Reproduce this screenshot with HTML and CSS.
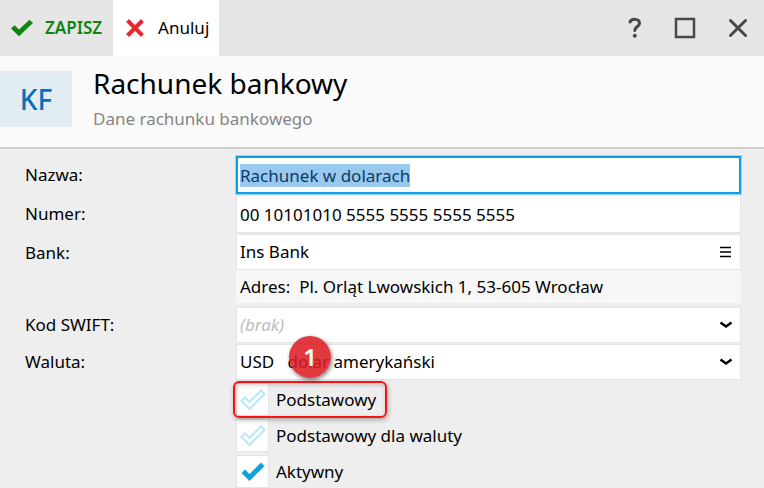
FILE: index.html
```html
<!DOCTYPE html>
<html lang="pl">
<head>
    <meta charset="utf-8">
    <title>Rachunek bankowy</title>
    <link rel="stylesheet" href="styles.css">
</head>
<body>
    <div class="toolbar">
        <button class="tool save">
            <svg width="24" height="18" viewBox="0 0 24 18"><path d="M1 9.500L4.500 6.200 9 10.600 19.500 0.800 23 4 9 17.200z" fill="#10840f"/></svg>
            ZAPISZ
        </button>
        <button class="tool cancel">
            <svg width="18" height="18" viewBox="0 0 18 18"><path d="M1.500 1.500L16.500 16.500M16.500 1.500L1.500 16.500" stroke="#e8262d" stroke-width="4"/></svg>
            Anuluj
        </button>
        <div class="window-buttons">
            <button aria-label="Pomoc">
                <svg width="14" height="22" viewBox="0 0 14 22"><path d="M2 5C3 1.600 11.500 1 11.500 6.200C11.500 9.500 6.800 9.500 6.800 13.500" fill="none" stroke="#484848" stroke-width="3" stroke-linecap="round"/><circle cx="6.800" cy="18.700" r="2" fill="#484848"/></svg>
            </button>
            <button aria-label="Maksymalizuj">
                <svg width="22" height="22" viewBox="0 0 22 22"><rect x="2" y="2" width="18" height="18" fill="none" stroke="#484848" stroke-width="2.500"/></svg>
            </button>
            <button aria-label="Zamknij">
                <svg width="20" height="20" viewBox="0 0 20 20"><path d="M2.500 2.500L17.500 17.500M17.500 2.500L2.500 17.500" stroke="#484848" stroke-width="3" stroke-linecap="round"/></svg>
            </button>
        </div>
    </div>

    <div class="header">
        <div class="initials">KF</div>
        <div class="titles">
            <h1>Rachunek bankowy</h1>
            <p>Dane rachunku bankowego</p>
        </div>
    </div>

    <form class="form">
        <label class="caption" for="nazwa">Nazwa:</label>
        <input class="field active" type="text" id="nazwa" value="Rachunek w dolarach">

        <label class="caption" for="numer">Numer:</label>
        <input class="field" type="text" id="numer" value="00 10101010 5555 5555 5555 5555">

        <label class="caption top" for="bank">Bank:</label>
        <div class="bank">
            <div class="field lookup">
                <input type="text" id="bank" value="Ins Bank">
                <button type="button" aria-label="Lista">
                    <svg width="12" height="12" viewBox="0 0 12 12"><path d="M0 1.500H11M0 6H11M0 10.500H11" stroke="#000" stroke-width="1.500"/></svg>
                </button>
            </div>
            <div class="address">Adres:&nbsp; Pl. Orląt Lwowskich 1, 53-605 Wrocław</div>
        </div>

        <label class="caption" for="swift">Kod SWIFT:</label>
        <div class="dropdown">
            <select class="field empty" id="swift">
                <option>(brak)</option>
            </select>
            <svg width="12" height="8" viewBox="0 0 12 8"><path d="M0.500 1.500L6 5.500 11.500 1.500" fill="none" stroke="#000" stroke-width="2.500"/></svg>
        </div>

        <label class="caption" for="waluta">Waluta:</label>
        <div class="dropdown">
            <select class="field" id="waluta">
                <option>USD&nbsp;&nbsp; dolar amerykański</option>
            </select>
            <svg width="12" height="8" viewBox="0 0 12 8"><path d="M0.500 1.500L6 5.500 11.500 1.500" fill="none" stroke="#000" stroke-width="2.500"/></svg>
            <span class="badge">1</span>
        </div>

        <div class="checks">
            <label class="check marked">
                <input type="checkbox">
                <svg width="26" height="22" viewBox="0 0 26 22"><path d="M1.500 12L5 8.500 9.500 13 21 1.500 24.500 5 9.500 20z"/></svg>
                <span>Podstawowy</span>
            </label>
            <label class="check">
                <input type="checkbox">
                <svg width="26" height="22" viewBox="0 0 26 22"><path d="M1.500 12L5 8.500 9.500 13 21 1.500 24.500 5 9.500 20z"/></svg>
                <span>Podstawowy dla waluty</span>
            </label>
            <label class="check">
                <input type="checkbox" checked>
                <svg width="26" height="22" viewBox="0 0 26 22"><path d="M1.500 12L5 8.500 9.500 13 21 1.500 24.500 5 9.500 20z"/></svg>
                <span>Aktywny</span>
            </label>
        </div>
    </form>
<script>
    let nazwa = document.getElementById("nazwa");
    nazwa.focus();
    nazwa.select();
</script>
</body>
</html>
```
FILE: styles.css
```css
* {
    box-sizing: border-box;
}

body {
    margin: 0;
    min-height: 100vh;
    background-color: #eeeeee;
    color: #000;
    font-family: "Noto Sans", "Open Sans", sans-serif;
    font-size: 17px;
    line-height: 24px;
}

button, input, select {
    margin: 0;
    font: inherit;
    color: inherit;
}

button {
    border: none;
    background: none;
    cursor: pointer;
}

.toolbar {
    display: flex;
    height: 56px;
    background-color: #e6e6e6;
}

.tool {
    display: flex;
    align-items: center;
    padding: 0 10px;
}

.save {
    gap: 11px;
    padding-right: 11px;
    color: #10840f;
    font-weight: 600;
}

.cancel {
    gap: 14px;
    padding-left: 13px;
    background-color: #fff;
}

.window-buttons {
    display: flex;
    align-items: center;
    margin-left: auto;
    padding-right: 16px;
    gap: 32px;
}

.window-buttons button {
    display: flex;
    padding: 0;
}

.header {
    display: flex;
    align-items: flex-start;
    gap: 21px;
    height: 93px;
    background-color: #fafafa;
    border-bottom: 2px solid #d0d0d0;
}

.initials {
    width: 72px;
    margin-top: 15px;
    background-color: #e1ecf3;
    color: #0a6fba;
    font-size: 28px;
    font-weight: 500;
    line-height: 56px;
    text-align: center;
}

.titles h1 {
    margin: 7px 0 0;
    font-size: 28px;
    font-weight: normal;
    line-height: 40px;
}

.titles p {
    margin: 4px 0 0;
    color: #858585;
}

.form {
    display: grid;
    grid-template-columns: 211px 1fr;
    row-gap: 1px;
    padding: 7px 23px 0 25px;
}

.caption {
    align-self: center;
    line-height: 24px;
}

.top {
    align-self: start;
    line-height: 38px;
}

.field {
    display: block;
    width: 100%;
    height: 36px;
    padding: 0 3px;
    border: 1px solid #e4e4e4;
    border-radius: 0;
    background-color: #fff;
    outline: none;
    appearance: none;
}

input.field {
    height: 38px;
}

.active {
    padding: 0 2px;
    border: 2px solid #0c9fe3;
    box-shadow: 0 0 0 1px #9bd5f0;
}

.active::selection {
    background-color: #99c9ef;
    color: #0b3a66;
}

.lookup {
    display: flex;
}

.lookup input {
    flex: 1;
    min-width: 0;
    padding: 0;
    border: none;
    background: none;
    outline: none;
}

.lookup button {
    display: flex;
    align-items: center;
    padding: 0 5px;
}

.address {
    margin-bottom: 3px;
    padding: 0 4px;
    background-color: #f7f7f7;
    line-height: 33px;
}

.empty {
    color: #bdbdbd;
    font-style: italic;
}

.dropdown {
    display: grid;
    position: relative;
    align-items: center;
}

.dropdown > select,
.dropdown > svg {
    grid-area: 1 / 1;
}

.dropdown > svg {
    justify-self: end;
    margin-right: 9px;
    pointer-events: none;
}

.badge {
    position: absolute;
    left: 53px;
    top: -8px;
    width: 42px;
    height: 42px;
    border-radius: 50%;
    background-color: rgba(222, 28, 36, 0.87);
    box-shadow: 1px 2px 4px rgba(0, 0, 0, 0.5);
    color: #fff;
    font-size: 24px;
    font-weight: 600;
    line-height: 42px;
    text-align: center;
}

.checks {
    grid-column: 2;
    display: flex;
    flex-direction: column;
    align-items: flex-start;
    gap: 3px;
    margin-top: 2px;
}

.check {
    display: grid;
    grid-template-columns: 33px auto;
    column-gap: 7px;
    align-items: center;
}

.check input {
    grid-area: 1 / 1;
    width: 33px;
    height: 33px;
    border: 1px solid #e4e4e4;
    background-color: #fff;
    appearance: none;
}

.check svg {
    grid-area: 1 / 1;
    justify-self: center;
    z-index: 1;
    fill: none;
    stroke: #b9e6f6;
    stroke-width: 2;
    pointer-events: none;
}

.check input:checked + svg {
    fill: #0aa5e0;
    stroke: none;
}

.check span {
    grid-area: 1 / 2;
}

.marked {
    position: relative;
}

.marked::after {
    content: "";
    position: absolute;
    inset: -2px -11px -2px -3px;
    border: 2px solid #f51414;
    border-radius: 6px;
    box-shadow: 1px 2px 5px rgba(0, 0, 0, 0.3), inset 1px 2px 5px rgba(0, 0, 0, 0.2);
    z-index: 2;
}
```
